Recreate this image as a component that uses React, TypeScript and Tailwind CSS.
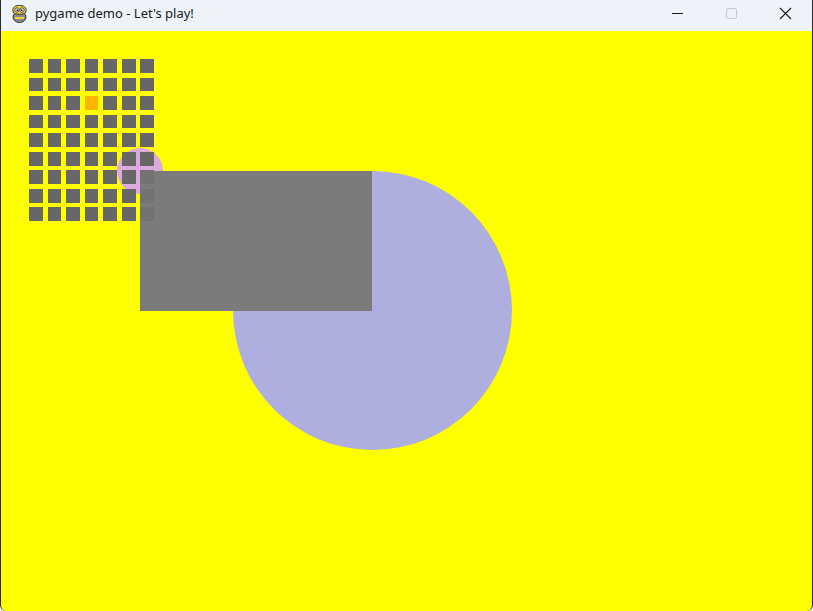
import React from "react";

// squares that sit under the translucent-looking gray box
const underBox = (r: number, c: number) => c === 6 && r >= 6;

const PygameIcon = () => (
  <svg width="19" height="20" viewBox="0 0 19 20">
    <ellipse cx="9.5" cy="13" rx="6.5" ry="5.5" fill="#8a8a8a" stroke="#3a3a3a" strokeWidth="1" />
    <path d="M3 8 C2 3 6 1 9.5 1.5 C13 1 17 3 16 8 C15 11 4 11 3 8 Z" fill="#f4d23a" stroke="#3a3a3a" strokeWidth="1" />
    <circle cx="7" cy="6" r="2.2" fill="#fff" stroke="#3a3a3a" strokeWidth="0.9" />
    <circle cx="12" cy="6" r="2.2" fill="#fff" stroke="#3a3a3a" strokeWidth="0.9" />
    <circle cx="7.3" cy="6.2" r="0.9" fill="#222" />
    <circle cx="11.7" cy="6.2" r="0.9" fill="#222" />
    <path d="M5 14 L14 14" stroke="#f4d23a" strokeWidth="2" />
  </svg>
);

const App = () => {
  const rows = Array.from({ length: 9 }, (_, i) => i);
  const cols = Array.from({ length: 7 }, (_, i) => i);

  return (
    <div
      className="w-[813px] h-[611px] flex flex-col overflow-hidden bg-[#eef3f9]"
      style={{ fontFamily: '"Noto Sans", "Open Sans", sans-serif' }}
    >
      {/* title bar */}
      <div className="h-[31px] flex items-center border-l border-r border-[#2b2b2b] bg-[#eef3f9]">
        <div className="ml-[9px] mt-[-3px]">
          <PygameIcon />
        </div>
        <span className="ml-[6px] text-[13px] text-[#1b1b1b] mt-[-3px]">pygame demo - Let's play!</span>
        <div className="ml-auto flex items-center h-full">
          <div className="w-[46px] h-full flex items-center justify-center mt-[-5px]">
            <div className="w-[11px] h-px bg-[#1b1b1b]" />
          </div>
          <div className="w-[8px]" />
          <div className="w-[46px] h-full flex items-center justify-center mt-[-5px]">
            <div className="w-[11px] h-[11px] border border-[#c7cacd] rounded-[2px]" />
          </div>
          <div className="w-[8px]" />
          <div className="w-[46px] h-full flex items-center justify-center mt-[-5px] mr-[4px]">
            <svg width="13" height="13" viewBox="0 0 13 13">
              <path d="M1 1 L12 12 M12 1 L1 12" stroke="#1b1b1b" strokeWidth="1.1" />
            </svg>
          </div>
        </div>
      </div>

      {/* game surface */}
      <div className="relative flex-1 bg-[#ffff00] border-l border-r border-[#2b2b2b] rounded-b-[6px] overflow-hidden">
        <div className="absolute left-[231.5px] top-[140px] w-[279px] h-[279px] rounded-full bg-[#afafdf]" />
        <div className="absolute left-[116px] top-[116.5px] w-[46px] h-[46px] rounded-full bg-[#dcaadc]" />
        <div className="absolute left-[139px] top-[139.5px] w-[232px] h-[140px] bg-[#7b7b7b]" />
        <div className="absolute left-[28px] top-[28px] grid grid-cols-[repeat(7,13.8px)] grid-rows-[repeat(9,13.8px)] gap-[4.75px]">
          {rows.map((r) =>
            cols.map((c) => (
              <div
                key={`${r}-${c}`}
                className={
                  r === 2 && c === 3
                    ? "bg-[#ffb400]"
                    : underBox(r, c)
                    ? "bg-[#737373]"
                    : "bg-[#676767]"
                }
              />
            ))
          )}
        </div>
      </div>
    </div>
  );
};

export default App;
